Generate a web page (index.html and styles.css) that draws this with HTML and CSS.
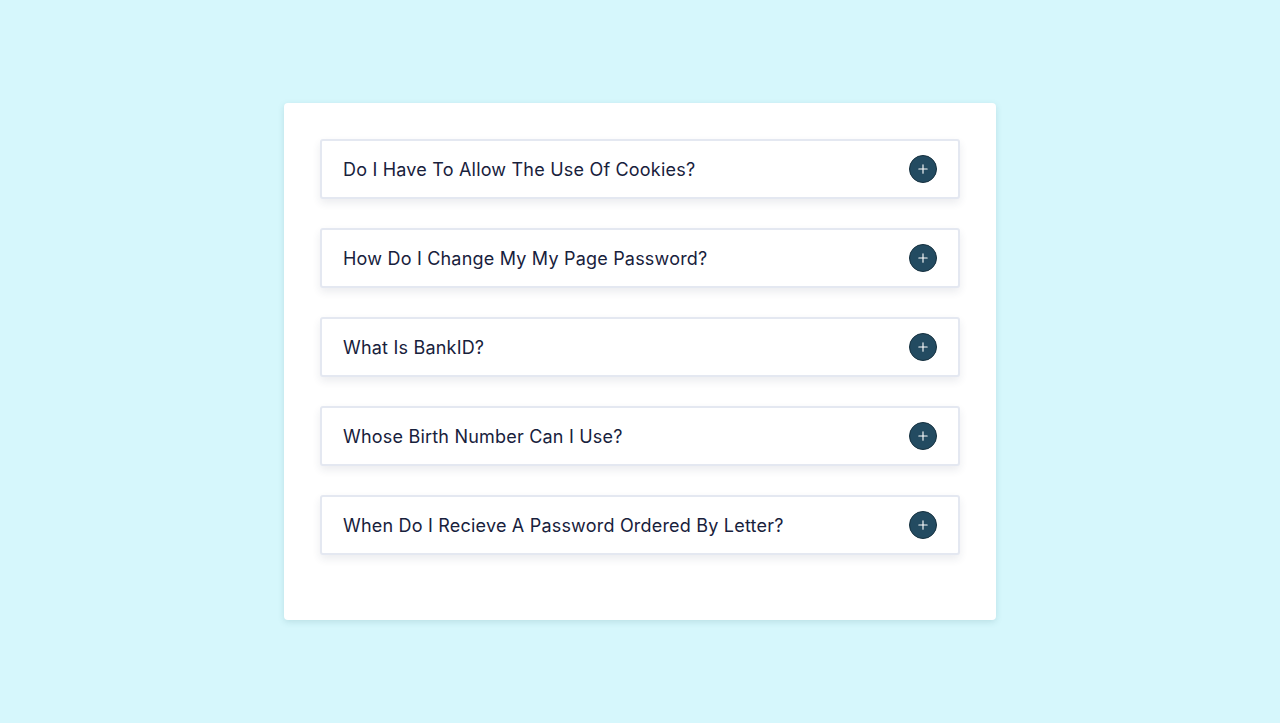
FILE: index.html
```html
<!DOCTYPE html>
<html lang="en">
<head>
<meta charset="utf-8">
<title>FAQ</title>
<link rel="stylesheet" href="styles.css">
</head>
<body>
<main class="page">
  <section class="card">
    <div class="item">
      <span class="question">Do I Have To Allow The Use Of Cookies?</span>
      <span class="toggle"><svg viewBox="0 0 28 28" width="28" height="28"><path d="M14 9.5v9M9.5 14h9" stroke="#fff" stroke-width="1.2" stroke-linecap="round"/></svg></span>
    </div>
    <div class="item">
      <span class="question">How Do I Change My My Page Password?</span>
      <span class="toggle"><svg viewBox="0 0 28 28" width="28" height="28"><path d="M14 9.5v9M9.5 14h9" stroke="#fff" stroke-width="1.2" stroke-linecap="round"/></svg></span>
    </div>
    <div class="item">
      <span class="question">What Is BankID?</span>
      <span class="toggle"><svg viewBox="0 0 28 28" width="28" height="28"><path d="M14 9.5v9M9.5 14h9" stroke="#fff" stroke-width="1.2" stroke-linecap="round"/></svg></span>
    </div>
    <div class="item">
      <span class="question">Whose Birth Number Can I Use?</span>
      <span class="toggle"><svg viewBox="0 0 28 28" width="28" height="28"><path d="M14 9.5v9M9.5 14h9" stroke="#fff" stroke-width="1.2" stroke-linecap="round"/></svg></span>
    </div>
    <div class="item">
      <span class="question">When Do I Recieve A Password Ordered By Letter?</span>
      <span class="toggle"><svg viewBox="0 0 28 28" width="28" height="28"><path d="M14 9.5v9M9.5 14h9" stroke="#fff" stroke-width="1.2" stroke-linecap="round"/></svg></span>
    </div>
  </section>
</main>
</body>
</html>
```
FILE: styles.css
```css
* { box-sizing: border-box; }
html, body {
  margin: 0;
  padding: 0;
  background: #d6f7fc;
  font-family: Inter, "Noto Sans", sans-serif;
}
.page {
  display: flex;
  justify-content: center;
  align-items: flex-start;
  padding-top: 103px;
  min-height: 723px;
}
.card {
  width: 712px;
  background: #ffffff;
  border-radius: 4px;
  padding: 36px 36px 36px;
  box-shadow: 0 2px 6px rgba(60, 120, 130, 0.18);
  display: flex;
  flex-direction: column;
}
.item {
  height: 60px;
  margin-bottom: 29px;
  border: 2px solid #e4e8f1;
  border-radius: 3px;
  background: #fff;
  box-shadow: 0 4px 8px rgba(30, 40, 80, 0.09);
  display: flex;
  align-items: center;
  justify-content: space-between;
  padding: 0 21px 0 21px;
}
.question {
  font-size: 18px;
  color: #18213c;
  letter-spacing: 0.2px;
}
.toggle {
  width: 28px;
  height: 28px;
  border-radius: 50%;
  background: #234b61;
  border: 1px solid #15303f;
  display: flex;
  align-items: center;
  justify-content: center;
}
.toggle svg { display: block; }
```
